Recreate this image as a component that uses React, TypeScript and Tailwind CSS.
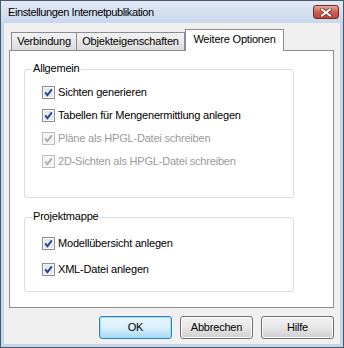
import React from "react";

function CheckBox({ disabled }: { disabled?: boolean }) {
  const border = disabled ? "#bdbdbd" : "#8e8f8f";
  const inner = disabled ? "#f4f4f4" : "#e6e8eb";
  const check = disabled ? "#acacac" : "#24419a";
  return (
    <svg width="13" height="13" viewBox="0 0 13 13" className="shrink-0">
      <rect x="0.5" y="0.5" width="12" height="12" fill="#f7f7f7" stroke={border} />
      <rect x="2" y="2" width="9" height="9" fill={inner} />
      <path d="M3.2 6.4 L5.4 9.2 L9.8 3.4" fill="none" stroke={check} strokeWidth="1.9" strokeLinejoin="miter" />
    </svg>
  );
}

function Row({ label, disabled, h }: { label: string; disabled?: boolean; h: string }) {
  return (
    <div className={`flex items-center gap-[3px] ${h}`}>
      <CheckBox disabled={disabled} />
      <span className={disabled ? "text-[#9a9a9a]" : "text-black"}>{label}</span>
    </div>
  );
}

function Btn({ label, def }: { label: string; def?: boolean }) {
  return (
    <div
      className={
        def
          ? "w-[73px] h-[23px] rounded-[3px] border border-[#3c7fb1] bg-gradient-to-b from-[#eaf6fd] via-[#d9f0fc] to-[#a7d9f5] flex items-center justify-center shadow-[inset_0_0_0_1px_#92e0ff]"
          : "w-[73px] h-[23px] rounded-[3px] border border-[#707070] bg-gradient-to-b from-[#f2f2f2] via-[#e6e6e6] to-[#cfcfcf] flex items-center justify-center shadow-[inset_0_0_0_1px_#fbfbfb]"
      }
    >
      {label}
    </div>
  );
}

export default function App() {
  return (
    <div className="w-[344px] h-[348px] border border-[#4a596d] bg-[#c6d6ea] flex flex-col font-['Liberation_Sans',Arial,sans-serif] text-[11px] tracking-[-0.2px] text-black">
      <div className="h-[22px] shrink-0 flex items-center justify-between pl-[7px] pr-[4px] bg-gradient-to-b from-[#e2eaf5] to-[#c8d7ea]">
        <span className="font-['Liberation_Sans',Arial,sans-serif] text-[11px] tracking-[-0.4px] leading-[14px]">Einstellungen Internetpublikation</span>
        <div className="w-[26px] h-[14px] rounded-[3px] border border-[#6d2b2b] bg-gradient-to-b from-[#e8a89c] via-[#cf5e50] to-[#c0433a] flex items-center justify-center">
          <svg width="12" height="9" viewBox="0 0 12 9">
            <path d="M2 1.5 L10 7.5 M10 1.5 L2 7.5" stroke="#7a3030" strokeWidth="3.6" strokeLinecap="square" />
            <path d="M2 1.5 L10 7.5 M10 1.5 L2 7.5" stroke="#ffffff" strokeWidth="2" strokeLinecap="square" />
          </svg>
        </div>
      </div>
      <div className="flex-1 mx-[3px] mb-[3px] bg-[#f0f0f0] flex flex-col">
        <div className="mt-[6px] ml-[7px] h-[21px] flex items-end">
          <div className="w-[66px] h-[18px] border border-b-0 border-[#898c95] bg-gradient-to-b from-[#f3f3f3] to-[#dcdcdc] flex items-center justify-center">
            Verbindung
          </div>
          <div className="w-[108px] h-[18px] border border-b-0 border-l-0 border-[#898c95] bg-gradient-to-b from-[#f3f3f3] to-[#dcdcdc] flex items-center justify-center">
            Objekteigenschaften
          </div>
          <div className="relative z-10 w-[99px] h-[22px] -mb-px border border-b-0 border-[#898c95] bg-white flex items-center justify-center pb-[2px]">
            Weitere Optionen
          </div>
        </div>
        <div className="ml-[5px] w-[325px] h-[258px] border border-[#898c95] bg-white flex flex-col">
          <div className="relative mt-[18px] ml-[14px] w-[270px] h-[129px] border border-[#d5dfe5] rounded-[3px] pt-[11px] pl-[17px]">
            <span className="absolute -top-[8px] left-[7px] bg-white px-[1px] leading-[13px]">Allgemein</span>
            <Row label="Sichten generieren" h="h-[23px]" />
            <Row label="Tabellen für Mengenermittlung anlegen" h="h-[23px]" />
            <Row label="Pläne als HPGL-Datei schreiben" disabled h="h-[23px]" />
            <Row label="2D-Sichten als HPGL-Datei schreiben" disabled h="h-[23px]" />
          </div>
          <div className="relative mt-[19px] ml-[14px] w-[270px] h-[75px] border border-[#d5dfe5] rounded-[3px] pt-[12px] pl-[17px]">
            <span className="absolute -top-[8px] left-[7px] bg-white px-[1px] leading-[13px]">Projektmappe</span>
            <Row label="Modellübersicht anlegen" h="h-[26px]" />
            <Row label="XML-Datei anlegen" h="h-[26px]" />
          </div>
        </div>
        <div className="mt-[8px] pr-[6px] flex justify-end gap-[8px]">
          <Btn label="OK" def />
          <Btn label="Abbrechen" />
          <Btn label="Hilfe" />
        </div>
      </div>
    </div>
  );
}
